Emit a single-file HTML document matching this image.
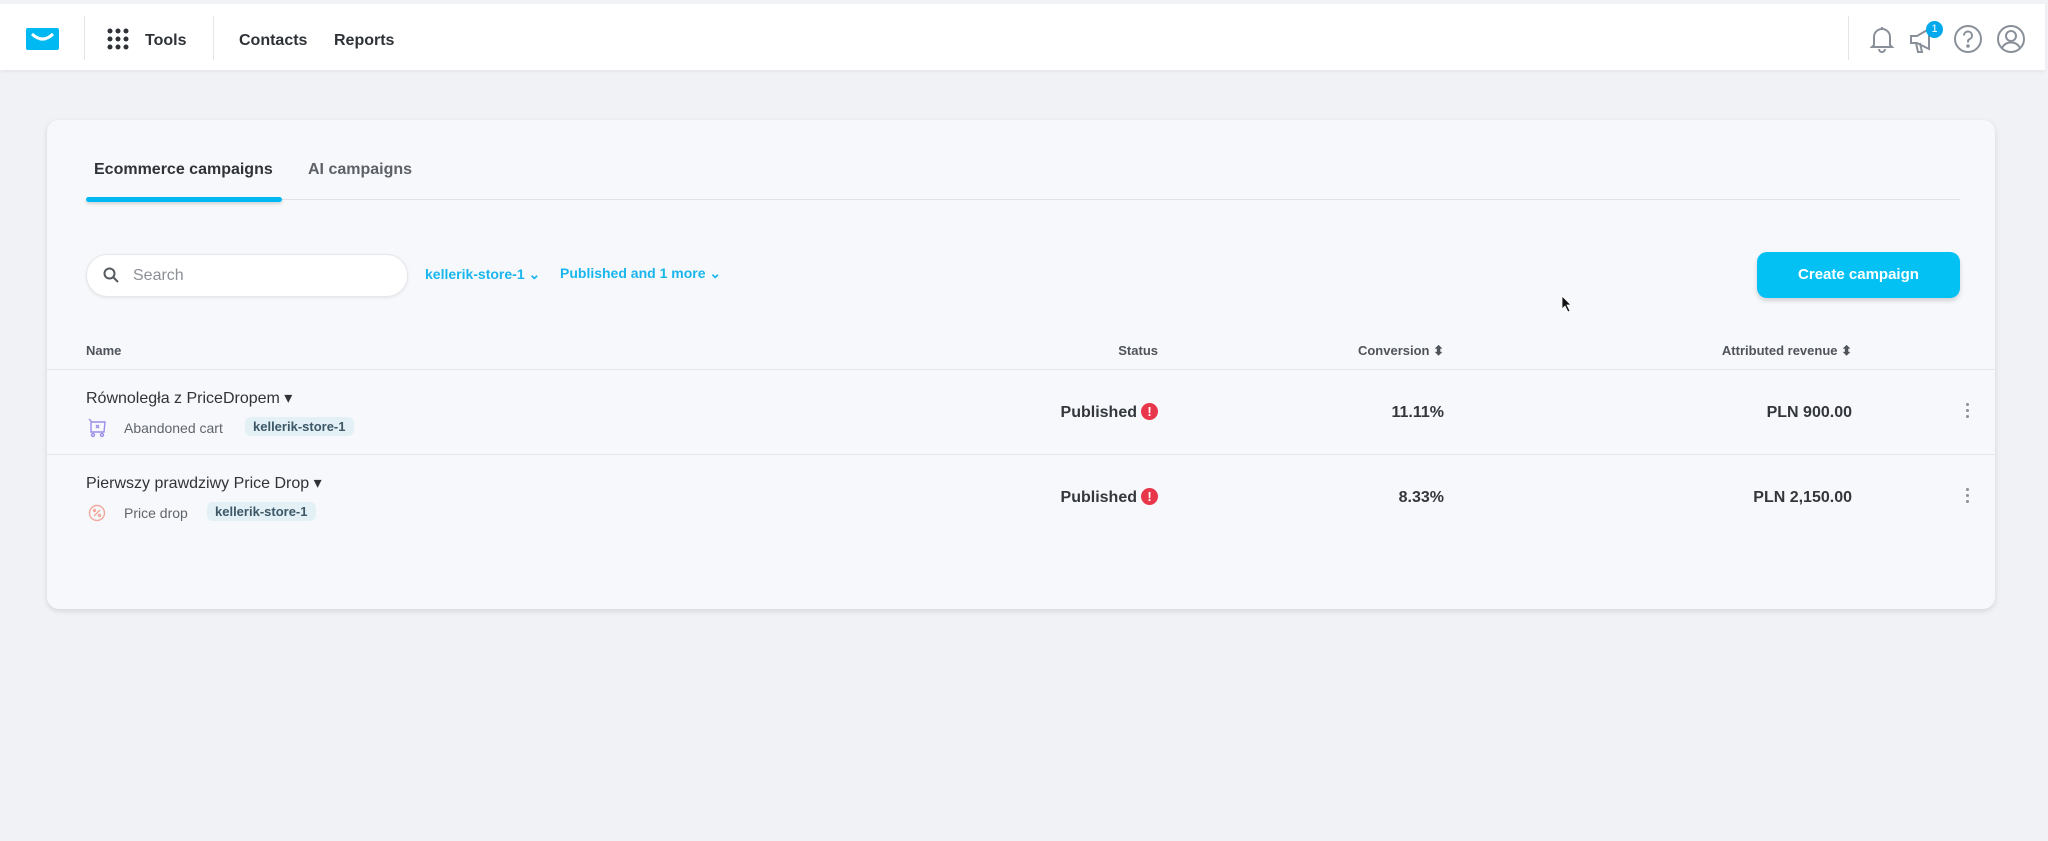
<!DOCTYPE html>
<html><head><meta charset="utf-8"><style>
*{box-sizing:border-box;margin:0;padding:0}
body{width:2048px;height:841px;background:#f1f2f6;font-family:"Liberation Sans",sans-serif;position:relative;overflow:hidden;color:#2f3338}
.abs{position:absolute}
.hdr{left:0;top:4px;width:2045px;height:66px;background:#fff;box-shadow:0 2px 4px rgba(0,0,0,.05)}
.nav{font-size:16px;font-weight:bold;color:#2e3237;top:32px}
.vd{width:1px;background:#e3e5e9;top:16px;height:44px}
.card{left:47px;top:120px;width:1948px;height:489px;background:#f7f8fb;border-radius:12px;box-shadow:0 2px 6px rgba(0,0,0,.12)}
.th{font-size:13px;color:#4f545b;top:343px;font-weight:bold}
.line{height:1px;background:#e4e6ea;left:47px;width:1948px}
.t{font-size:16px;color:#2f3338}
.s{font-size:14px;color:#60656c}
.tag{font-size:13px;font-weight:bold;color:#3d5766;background:#e3f1f7;border-radius:6px;padding:2px 8px}
.num{font-size:16px;font-weight:bold;color:#33373c;text-align:right}
.ex{display:inline-block;width:17px;height:17px;border-radius:50%;background:#e8364a;color:#fff;font-size:13px;text-align:center;line-height:17px;vertical-align:1px;margin-left:4px}
.keb{width:3px;height:3px;background:#8a8f96;border-radius:50%;box-shadow:0 6px 0 #8a8f96,0 12px 0 #8a8f96}
</style></head><body>
<div class="abs hdr"></div>
<svg class="abs" style="left:26px;top:28px" width="33" height="22" viewBox="0 0 33 22"><rect width="33" height="22" rx="2" fill="#00b9f2"/><path d="M6 6 Q16.5 16 27 6" stroke="#fff" stroke-width="3" fill="none"/></svg>
<div class="abs vd" style="left:84px"></div>
<svg class="abs" style="left:107px;top:28px" width="22" height="22"><g fill="#2e3237"><circle cx="3" cy="3" r="2.5"/><circle cx="11" cy="3" r="2.5"/><circle cx="19" cy="3" r="2.5"/><circle cx="3" cy="11" r="2.5"/><circle cx="11" cy="11" r="2.5"/><circle cx="19" cy="11" r="2.5"/><circle cx="3" cy="19" r="2.5"/><circle cx="11" cy="19" r="2.5"/><circle cx="19" cy="19" r="2.5"/></g></svg>
<div class="abs nav" style="left:145px">Tools</div>
<div class="abs vd" style="left:213px"></div>
<div class="abs nav" style="left:239px">Contacts</div>
<div class="abs nav" style="left:334px">Reports</div>
<div class="abs vd" style="left:1848px"></div>
<svg class="abs" style="left:1869px;top:25px" width="26" height="28" viewBox="0 0 26 28" fill="none" stroke="#8a9099" stroke-width="2"><path d="M5 20V12a8 8 0 0 1 16 0v8l2 2H3z"/><path d="M10 24a3 3 0 0 0 6 0"/><path d="M13 2v2"/></svg>
<svg class="abs" style="left:1908px;top:26px" width="30" height="28" viewBox="0 0 30 28" fill="none" stroke="#8a9099" stroke-width="2"><path d="M3 10h6l12-7v20L9 17H3z"/><path d="M8 17l2 9h4l-2-9"/></svg>
<div class="abs" style="left:1926px;top:21px;width:17px;height:17px;border-radius:50%;background:#00a9ec;color:#fff;font-size:11px;text-align:center;line-height:17px">1</div>
<svg class="abs" style="left:1953px;top:24px" width="30" height="30" viewBox="0 0 30 30" fill="none" stroke="#8a9099" stroke-width="2"><circle cx="15" cy="15" r="13"/><path d="M11 11.5a4 4 0 1 1 5.5 3.7c-1 .5-1.5 1.3-1.5 2.3v1"/><circle cx="15" cy="22" r=".8" fill="#8a9099"/></svg>
<svg class="abs" style="left:1996px;top:24px" width="30" height="30" viewBox="0 0 30 30" fill="none" stroke="#8a9099" stroke-width="2"><circle cx="15" cy="15" r="13"/><circle cx="15" cy="12" r="5"/><path d="M6 24c2-4 5-5.5 9-5.5s7 1.5 9 5.5"/></svg>

<div class="abs card"></div>
<div class="abs" style="left:94px;top:161px;font-size:16px;font-weight:bold;color:#2f3338">Ecommerce campaigns</div>
<div class="abs" style="left:308px;top:161px;font-size:16px;font-weight:bold;color:#5c6168">AI campaigns</div>
<div class="abs" style="left:86px;top:199px;width:1874px;height:1px;background:#e0e2e6"></div>
<div class="abs" style="left:86px;top:197px;width:196px;height:5px;background:#00b9f2;border-radius:3px;box-shadow:0 2px 3px rgba(0,0,0,.15)"></div>

<div class="abs" style="left:86px;top:254px;width:322px;height:43px;background:#fff;border-radius:22px;border:1px solid #e6e8eb;box-shadow:0 1px 3px rgba(0,0,0,.08)"></div>
<svg class="abs" style="left:103px;top:267px" width="16" height="16" fill="none" stroke="#555a60" stroke-width="2"><circle cx="6.5" cy="6.5" r="5"/><path d="M10 10l5 5"/></svg>
<div class="abs" style="left:133px;top:267px;font-size:16px;color:#8b9096">Search</div>
<div class="abs" style="left:425px;top:266px;font-size:14px;font-weight:bold;color:#19b6ee">kellerik-store-1 ⌄</div>
<div class="abs" style="left:560px;top:265px;font-size:14px;font-weight:bold;color:#19b6ee">Published and 1 more ⌄</div>
<div class="abs" style="left:1757px;top:252px;width:203px;height:46px;background:#04c1f4;border-radius:10px;box-shadow:0 3px 5px rgba(0,0,0,.15);color:#fff;font-size:15px;font-weight:bold;text-align:center;line-height:46px">Create campaign</div>
<svg class="abs" style="left:1561px;top:295px" width="12" height="18"><path d="M1 1v13l3-3 3 6 2-1-3-6h4z" fill="#111" stroke="#fff" stroke-width=".8"/></svg>

<div class="abs th" style="left:86px">Name</div>
<div class="abs th" style="left:1058px;width:100px;text-align:right">Status</div>
<div class="abs th" style="left:1300px;width:144px;text-align:right">Conversion ⬍</div>
<div class="abs th" style="left:1650px;width:202px;text-align:right">Attributed revenue ⬍</div>
<div class="abs line" style="top:369px"></div>

<div class="abs t" style="left:86px;top:388px">Równoległa z PriceDropem ▾</div>
<svg class="abs" style="left:88px;top:418px" width="18" height="20" fill="none" stroke="#9b8ee8" stroke-width="1.4"><path d="M1 1l2 2v11h13l1-10H3"/><path d="M8 7l3 3M11 7l-3 3"/><circle cx="5" cy="17" r="1.5"/><circle cx="14" cy="17" r="1.5"/></svg>
<div class="abs s" style="left:124px;top:420px">Abandoned cart</div>
<div class="abs tag" style="left:245px;top:417px">kellerik-store-1</div>
<div class="abs num" style="left:1000px;top:403px;width:158px">Published<span class="ex">!</span></div>
<div class="abs num" style="left:1300px;top:404px;width:144px">11.11%</div>
<div class="abs num" style="left:1650px;top:404px;width:202px">PLN 900.00</div>
<div class="abs keb" style="left:1966px;top:403px"></div>
<div class="abs line" style="top:454px"></div>

<div class="abs t" style="left:86px;top:473px">Pierwszy prawdziwy Price Drop ▾</div>
<svg class="abs" style="left:88px;top:504px" width="18" height="18" fill="none" stroke="#f0a99a" stroke-width="1.4"><circle cx="9" cy="9" r="7.5"/><path d="M6 12l6-6"/><circle cx="6.5" cy="6.5" r="1"/><circle cx="11.5" cy="11.5" r="1"/></svg>
<div class="abs s" style="left:124px;top:505px">Price drop</div>
<div class="abs tag" style="left:207px;top:502px">kellerik-store-1</div>
<div class="abs num" style="left:1000px;top:488px;width:158px">Published<span class="ex">!</span></div>
<div class="abs num" style="left:1300px;top:489px;width:144px">8.33%</div>
<div class="abs num" style="left:1650px;top:489px;width:202px">PLN 2,150.00</div>
<div class="abs keb" style="left:1966px;top:488px"></div>
</body></html>
